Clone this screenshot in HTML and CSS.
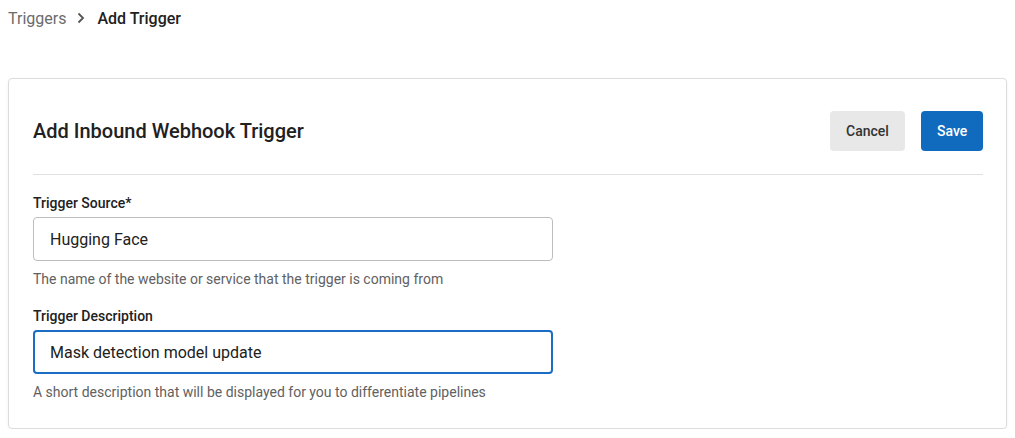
FILE: index.html
```html
<!DOCTYPE html>
<html lang="en">
<head>
  <meta charset="UTF-8">
  <title>Add Trigger</title>
  <link rel="stylesheet" href="styles.css">
</head>
<body>

<div class="breadcrumb">
  <span class="crumb">Triggers</span>
  <svg class="crumb-sep" width="20" height="20" viewBox="0 0 20 20">
    <path d="M7.5 5.5 L12 10 L7.5 14.5" fill="none" stroke="#555" stroke-width="1.8"/>
  </svg>
  <span class="crumb crumb-current">Add Trigger</span>
</div>

<div class="card">
  <div class="card-head">
    <h1 class="card-title">Add Inbound Webhook Trigger</h1>
    <div class="actions">
      <button class="btn btn-cancel">Cancel</button>
      <button class="btn btn-save">Save</button>
    </div>
  </div>

  <div class="field">
    <label class="field-label" for="source">Trigger Source*</label>
    <input class="field-input" id="source" type="text" value="Hugging Face">
    <div class="field-help">The name of the website or service that the trigger is coming from</div>
  </div>

  <div class="field">
    <label class="field-label" for="desc">Trigger Description</label>
    <input class="field-input is-focused" id="desc" type="text" value="Mask detection model update">
    <div class="field-help">A short description that will be displayed for you to differentiate pipelines</div>
  </div>
</div>

</body>
</html>
```

FILE: styles.css
```css
body {
  margin: 0;
  padding: 0 8px;
  background: #fff;
  font-family: Roboto, "Liberation Sans", sans-serif;
  color: #212121;
}

.breadcrumb {
  display: flex;
  align-items: center;
  height: 36px;
  font-size: 16px;
}

.crumb {
  color: #6b6b6b;
}

.crumb-sep {
  margin: 0 6px 0 5px;
}

.crumb-current {
  color: #212121;
  font-weight: 500;
}

.card {
  margin-top: 42px;
  border: 1px solid #dcdcdc;
  border-radius: 4px;
  box-shadow: 0 1px 3px rgba(0, 0, 0, 0.06);
  padding: 32px 23px 26px 24px;
}

.card-head {
  display: flex;
  align-items: center;
  justify-content: space-between;
  padding-bottom: 23px;
  border-bottom: 1px solid #e0e0e0;
  margin-bottom: 18px;
}

.card-title {
  margin: 0;
  font-size: 20px;
  font-weight: 500;
  color: #212121;
}

.actions {
  display: flex;
  gap: 16px;
}

.btn {
  height: 40px;
  border: none;
  border-radius: 4px;
  font-family: inherit;
  font-size: 14px;
  font-weight: 500;
  padding: 0 16px;
  cursor: pointer;
}

.btn-cancel {
  width: 75px;
  background: #e8e8e8;
  color: #333;
}

.btn-save {
  width: 62px;
  background: #106bbf;
  color: #fff;
}

.field {
  display: flex;
  flex-direction: column;
  align-items: flex-start;
  margin-bottom: 17px;
}

.field:last-child {
  margin-bottom: 0;
}

.field-label {
  font-size: 14px;
  font-weight: 500;
  line-height: 20px;
  color: #212121;
  margin-bottom: 4px;
}

.field-input {
  box-sizing: border-box;
  width: 520px;
  height: 44px;
  border: 1px solid #bdbdbd;
  border-radius: 4px;
  padding: 0 16px;
  font-family: inherit;
  font-size: 16px;
  color: #212121;
  outline: none;
  margin: 0;
}

.field-input.is-focused {
  border: 2px solid #1a6dc2;
  padding: 0 15px;
}

.field-help {
  margin-top: 8px;
  font-size: 14px;
  line-height: 20px;
  color: #616161;
}
```
